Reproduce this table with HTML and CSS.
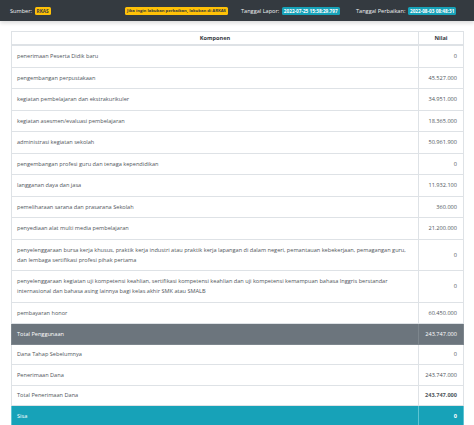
FILE: index.html
```html
<!DOCTYPE html>
<html>
<head>
<meta charset="utf-8">
<link rel="stylesheet" href="styles.css">
</head>
<body>
<div class="topbar">
  <div class="grp">
    <span class="lbl">Sumber:</span><span class="badge warn">RKAS</span>
  </div>
  <div class="grp">
    <span class="badge warn small">Jika ingin lakukan perbaikan, lakukan di ARKAS</span>
  </div>
  <div class="grp">
    <span class="lbl">Tanggal Lapor:</span><span class="badge info">2022-07-25 15:38:29.797</span>
  </div>
  <div class="grp">
    <span class="lbl">Tanggal Perbaikan:</span><span class="badge info">2022-08-03 08:48:31</span>
  </div>
</div>
<div class="wrap">
<table class="tbl">
  <colgroup><col class="col1"><col class="col2"></colgroup>
  <thead>
    <tr><th class="center">Komponen</th><th class="center">Nilai</th></tr>
  </thead>
  <tbody>
    <tr><td>penerimaan Peserta Didik baru</td><td class="num">0</td></tr>
    <tr><td>pengembangan perpustakaan</td><td class="num">45.527.000</td></tr>
    <tr><td>kegiatan pembelajaran dan ekstrakurikuler</td><td class="num">34.951.000</td></tr>
    <tr><td>kegiatan asesmen/evaluasi pembelajaran</td><td class="num">18.365.000</td></tr>
    <tr><td>administrasi kegiatan sekolah</td><td class="num">50.961.900</td></tr>
    <tr><td>pengembangan profesi guru dan tenaga kependidikan</td><td class="num">0</td></tr>
    <tr><td>langganan daya dan jasa</td><td class="num">11.932.100</td></tr>
    <tr><td>pemeliharaan sarana dan prasarana Sekolah</td><td class="num">360.000</td></tr>
    <tr><td>penyediaan alat multi media pembelajaran</td><td class="num">21.200.000</td></tr>
    <tr><td>penyelenggaraan bursa kerja khusus, praktik kerja industri atau praktik kerja lapangan di dalam negeri, pemantauan kebekerjaan, pemagangan guru, dan lembaga sertifikasi profesi pihak pertama</td><td class="num">0</td></tr>
    <tr><td>penyelenggaraan kegiatan uji kompetensi keahlian, sertifikasi kompetensi keahlian dan uji kompetensi kemampuan bahasa Inggris berstandar internasional dan bahasa asing lainnya bagi kelas akhir SMK atau SMALB</td><td class="num">0</td></tr>
    <tr><td>pembayaran honor</td><td class="num">60.450.000</td></tr>
    <tr class="dark foot"><td>Total Penggunaan</td><td class="num">243.747.000</td></tr>
    <tr class="foot"><td>Dana Tahap Sebelumnya</td><td class="num">0</td></tr>
    <tr class="foot"><td>Penerimaan Dana</td><td class="num">243.747.000</td></tr>
    <tr class="foot"><td>Total Penerimaan Dana</td><td class="num bold">243.747.000</td></tr>
    <tr class="teal foot"><td>Sisa</td><td class="num bold">0</td></tr>
  </tbody>
</table>
</div>
</body>
</html>
```
FILE: styles.css
```css
html, body {
  margin: 0;
  padding: 0;
  background: #ffffff;
  font-family: "Open Sans", "Noto Sans", sans-serif;
  overflow: hidden;
}
.topbar {
  height: 21px;
  background: #343a40;
  display: grid;
  grid-template-columns: 115px 116px 115px auto;
  align-items: center;
  padding: 0 0 0 10px;
  font-size: 5.6px;
  color: #ffffff;
  white-space: nowrap;
  box-shadow: 0 2px 4px rgba(0,0,0,0.15);
}
.grp {
  display: flex;
  align-items: center;
}
.lbl {
  margin-right: 2.6px;
  color: #f1f3f5;
}
.badge {
  display: inline-block;
  font-size: 4.7px;
  font-weight: 700;
  line-height: 8px;
  height: 8px;
  padding: 0 2px;
  border-radius: 1.5px;
}
.badge.small {
  font-size: 4.2px;
}
.warn {
  background: #ffc107;
  color: #343a40;
}
.info {
  background: #17a2b8;
  color: #ffffff;
}
.wrap {
  padding: 10px 11px 0 11px;
}
.tbl {
  width: 452px;
  table-layout: fixed;
  border-collapse: collapse;
  font-size: 5.6px;
  color: #50565c;
}
.col1 {
  width: 407px;
}
.col2 {
  width: 45px;
}
.tbl th, .tbl td {
  border: 1px solid #dee2e6;
  padding: 5.25px 5px;
  line-height: 10px;
  text-align: left;
  vertical-align: middle;
}
.tbl th {
  font-weight: 700;
  color: #343a40;
  padding: 1px 5px;
  border-bottom-width: 2px;
}
.tbl th.center {
  text-align: center;
}
.tbl .foot td {
  padding-top: 4.75px;
  padding-bottom: 4.75px;
}
.tbl td.num {
  text-align: right;
  padding-right: 6px;
  padding-left: 2px;
}
.tbl td.bold {
  font-weight: 700;
}
.dark td {
  background: #6c757d;
  color: #ffffff;
  border-color: #7d868d;
}
.teal td {
  background: #17a2b8;
  color: #ffffff;
  border-color: #5ec4d3;
}
```
